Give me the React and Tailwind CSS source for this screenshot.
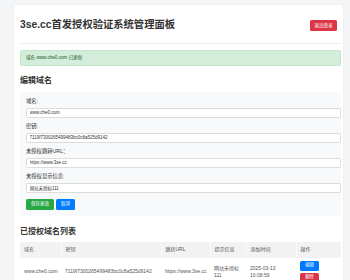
const FONT = { fontFamily: '"Liberation Sans", "Noto Sans CJK SC", sans-serif' };

const FIELDS = [
  { label: '域名:', value: 'www.che0.com' },
  { label: '密钥:', value: '7119f7300265499483bc0c8a525d9142' },
  { label: '未授权跳转URL：', value: 'https://www.3se.cc' },
  { label: '未授权显示信息:', value: '网站未授权111' },
];

const COLS = [
  { name: '域名', w: 'w-[41px]' },
  { name: '密钥', w: 'w-[100px]' },
  { name: '跳转URL', w: 'w-[49px]' },
  { name: '提示信息', w: 'w-[36px]' },
  { name: '添加时间', w: 'w-[50px]' },
  { name: '操作', w: 'w-[45px]' },
];

export default function App() {
  return (
    <div className="min-h-[280px] w-[350px] overflow-hidden bg-[#f4f5f7] pt-[5px] text-[#333]" style={FONT}>
      <div className="ml-[14px] w-[329px] rounded-[3px] bg-white pt-[7px] pl-[6px] pr-[2px] pb-[20px] shadow-[0_0_3px_rgba(0,0,0,0.05)]">
        <div className="flex items-center justify-between border-b border-[#eee] pt-[5px] pb-[10px]">
          <h1 className="text-[10.3px] font-bold leading-[16px] text-[#333]">3se.cc首发授权验证系统管理面板</h1>
          <button className="mr-[4px] h-[11px] w-[27px] rounded-[1.5px] bg-[#dc3545] text-[4.6px] leading-[11px] text-white">退出登录</button>
        </div>

        <div className="mt-[6px] flex h-[16px] items-center rounded-[2px] border border-[#c3e6cb] bg-[#d4edda] px-[5px] text-[4.6px] text-[#155724]">
          域名 www.che0.com 已更新
        </div>

        <h2 className="mt-[10px] text-[8px] font-bold leading-[10px] text-[#333]">编辑域名</h2>

        <div className="mt-[6px] rounded-[3px] bg-[#f8f9fa] pt-[6px] pb-[6px] pl-[6px]">
          {FIELDS.map((f, i) => (
            <div key={f.label} className={i > 0 ? 'mt-[5.5px]' : ''}>
              <div className="text-[5.3px] leading-[7px] text-[#333]">{f.label}</div>
              <input
                readOnly
                value={f.value}
                className="mt-[2.5px] block h-[10px] w-[315px] rounded-[1.5px] border border-[#dcdcdc] bg-white px-[2.5px] text-[4.5px] text-[#333] outline-none"
                style={FONT}
              />
            </div>
          ))}
          <div className="mt-[6px] flex gap-[2px]">
            <button className="h-[11px] w-[28px] rounded-[1.5px] bg-[#28a745] text-[4.5px] text-white">保存更改</button>
            <button className="h-[11px] w-[19px] rounded-[1.5px] bg-[#007bff] text-[4.5px] text-white">取消</button>
          </div>
        </div>

        <h2 className="mt-[11px] text-[8px] font-bold leading-[10px] text-[#333]">已授权域名列表</h2>

        <table className="mt-[5px] w-[321px] table-fixed border-collapse text-left text-[5px] text-[#555]">
          <colgroup>
            {COLS.map(c => <col key={c.name} className={c.w} />)}
          </colgroup>
          <thead>
            <tr className="bg-[#f2f2f2]">
              {COLS.map(c => (
                <th key={c.name} className="h-[16px] border-x border-[#fafafa] px-[4px] font-normal first:border-l-0 last:border-r-0">{c.name}</th>
              ))}
            </tr>
          </thead>
          <tbody>
            <tr className="border-b border-[#eee] leading-[6.5px]">
              <td className="px-[4px] py-[3px]">www.che0.com</td>
              <td className="px-[4px] py-[3px] whitespace-nowrap">7119f7300265499483bc0c8a525d9142</td>
              <td className="px-[4px] py-[3px] whitespace-nowrap">https://www.3se.cc</td>
              <td className="px-[4px] py-[3px]">网站未授权 111</td>
              <td className="px-[4px] py-[3px]">2025-03-13 10:08:59</td>
              <td className="px-[4px] py-[3px]">
                <button className="block h-[10px] w-[19px] rounded-[1.5px] bg-[#007bff] text-[4.3px] text-white">编辑</button>
                <button className="mt-[2px] block h-[10px] w-[19px] rounded-[1.5px] bg-[#dc3545] text-[4.3px] text-white">删除</button>
              </td>
            </tr>
          </tbody>
        </table>
      </div>
    </div>
  );
}
